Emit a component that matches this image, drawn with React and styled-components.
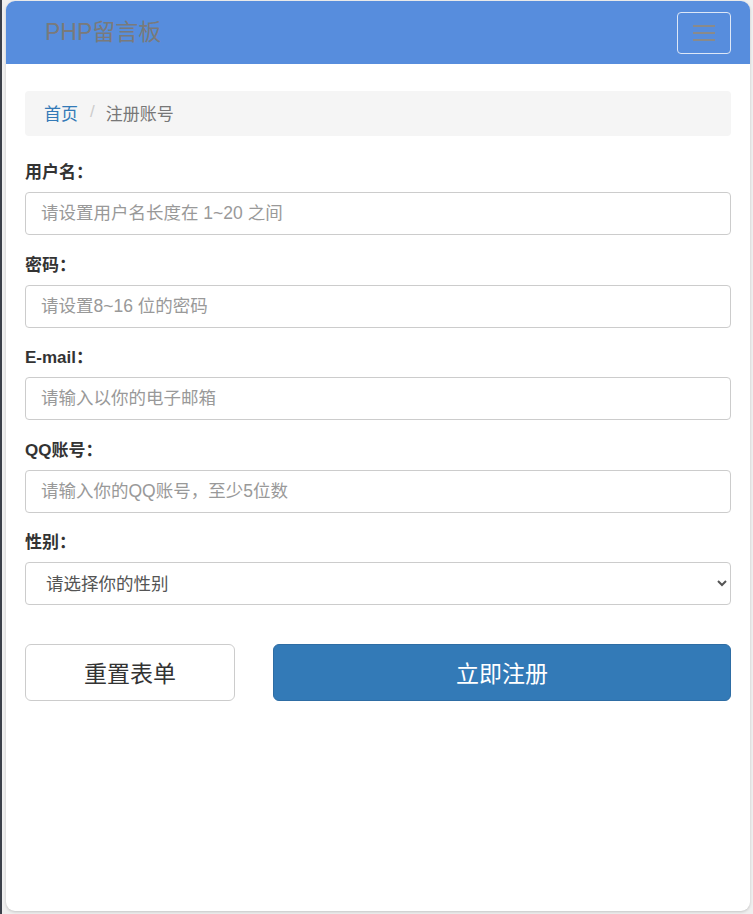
import React from "react";
import styled, { createGlobalStyle } from "styled-components";

const GlobalStyle = createGlobalStyle`
  html, body {
    margin: 0;
    padding: 0;
    background: #efefef;
  }
  body {
    font-family: "Liberation Sans", "Noto Sans CJK SC", sans-serif;
    color: #333;
  }
  * {
    box-sizing: border-box;
  }
`;

const fields = [
  { label: "用户名：", placeholder: "请设置用户名长度在 1~20 之间", type: "text" },
  { label: "密码：", placeholder: "请设置8~16 位的密码", type: "password" },
  { label: "E-mail：", placeholder: "请输入以你的电子邮箱", type: "email" },
  { label: "QQ账号：", placeholder: "请输入你的QQ账号，至少5位数", type: "text" },
];

const App = () => {
  return (
    <Page>
      <GlobalStyle />
      <Card>
        <Navbar>
          <Brand>PHP留言板</Brand>
          <Toggle type="button" aria-label="menu">
            <Bar />
            <Bar />
            <Bar />
          </Toggle>
        </Navbar>
        <Content>
          <Breadcrumb>
            <Crumb href="#">首页</Crumb>
            <Divider>/</Divider>
            <Current>注册账号</Current>
          </Breadcrumb>
          <Form onSubmit={(e) => e.preventDefault()}>
            {fields.map((f) => (
              <Group key={f.label}>
                <Label>{f.label}</Label>
                <Input type={f.type} placeholder={f.placeholder} />
              </Group>
            ))}
            <Group>
              <Label>性别：</Label>
              <Select defaultValue="">
                <option value="">请选择你的性别</option>
                <option value="m">男</option>
                <option value="f">女</option>
              </Select>
            </Group>
            <Actions>
              <Button type="reset">重置表单</Button>
              <Button type="submit" primary>
                立即注册
              </Button>
            </Actions>
          </Form>
        </Content>
      </Card>
    </Page>
  );
};

const Page = styled.div`
  min-height: 914px;
  padding: 1px 3px 3px 4px;
  border-left: 2px solid #3b404a;
  display: flex;
`;

const Card = styled.div`
  flex: 1;
  height: 910px;
  background: #fff;
  border-radius: 9px;
  overflow: hidden;
  box-shadow: 0 1px 3px rgba(0, 0, 0, 0.18);
  display: flex;
  flex-direction: column;
`;

const Navbar = styled.div`
  height: 63px;
  background: #578ddd;
  display: flex;
  align-items: center;
  justify-content: space-between;
  padding: 0 19px 0 39px;
`;

const Brand = styled.span`
  font-size: 23px;
  color: #7a7a7a;
  line-height: 1;
`;

const Toggle = styled.button`
  width: 54px;
  height: 42px;
  background: transparent;
  border: 1px solid #dde7f7;
  border-radius: 4px;
  display: flex;
  flex-direction: column;
  align-items: center;
  justify-content: center;
  gap: 5px;
  padding: 0;
`;

const Bar = styled.span`
  display: block;
  width: 22px;
  height: 2px;
  background: #8a8a8a;
`;

const Content = styled.div`
  padding: 27px 19px 0;
`;

const Breadcrumb = styled.div`
  height: 45px;
  background: #f5f5f5;
  border-radius: 4px;
  display: flex;
  align-items: center;
  padding: 0 19px 3px;
  font-size: 17px;
  font-family: "Noto Sans CJK SC", sans-serif;
`;

const Crumb = styled.a`
  color: #337ab7;
  text-decoration: none;
`;

const Divider = styled.span`
  color: #ccc;
  padding: 0 11px 0 12px;
  font-family: "Liberation Sans", sans-serif;
`;

const Current = styled.span`
  color: #777;
`;

const Form = styled.form`
  margin-top: 25px;
  display: flex;
  flex-direction: column;
`;

const Group = styled.div`
  display: flex;
  flex-direction: column;
  margin-bottom: 18.5px;
`;

const Label = styled.label`
  font-size: 17px;
  font-weight: bold;
  line-height: 24px;
  margin-bottom: 7px;
  color: #333;
`;

const Input = styled.input`
  height: 43px;
  border: 1px solid #ccc;
  border-radius: 4px;
  padding: 0 15px;
  font-size: 17.5px;
  font-family: "Liberation Sans", "Noto Sans CJK SC", sans-serif;
  color: #555;
  outline: none;
  &::placeholder {
    color: #999;
  }
`;

const Select = styled.select`
  height: 43px;
  border: 1px solid #ccc;
  border-radius: 4px;
  padding: 0 12px 0 16px;
  font-size: 17.5px;
  font-family: "Liberation Sans", "Noto Sans CJK SC", sans-serif;
  color: #555;
  background: #fff;
  outline: none;
`;

const Actions = styled.div`
  margin-top: 20px;
  display: grid;
  grid-template-columns: 210px 1fr;
  column-gap: 38px;
`;

const Button = styled.button`
  height: 57px;
  border-radius: 6px;
  font-size: 23px;
  font-family: "Noto Sans CJK SC", sans-serif;
  border: 1px solid ${(p) => (p.primary ? "#2e6da4" : "#ccc")};
  background: ${(p) => (p.primary ? "#337ab7" : "#fff")};
  color: ${(p) => (p.primary ? "#fff" : "#333")};
  cursor: pointer;
`;

export default App;
